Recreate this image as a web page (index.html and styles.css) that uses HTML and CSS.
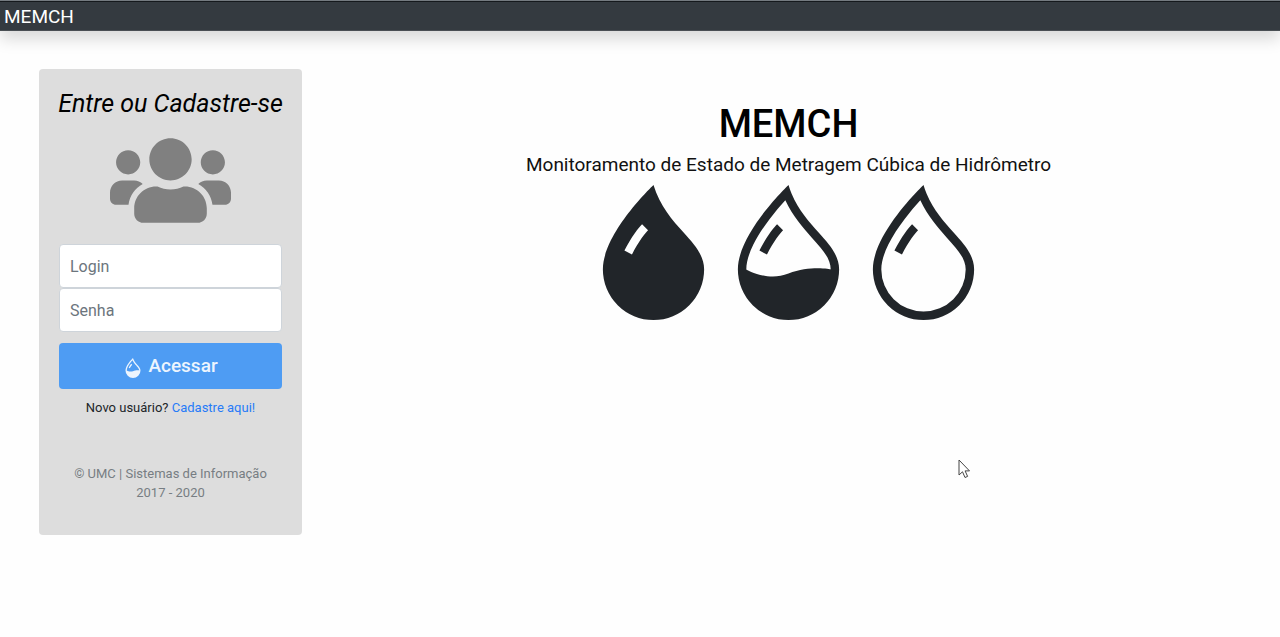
FILE: index.html
```html
<!DOCTYPE html>
<html lang="pt-BR">
<head>
<meta charset="utf-8">
<meta name="viewport" content="width=device-width, initial-scale=1">
<title>MEMCH</title>
<link rel="stylesheet" href="styles.css">
</head>
<body>
<header class="navbar"><a class="brand" href="#">MEMCH</a></header>
<div class="layout">
  <form class="card" onsubmit="return false">
    <h2 class="card-title">Entre ou Cadastre-se</h2>
    <svg class="users" viewBox="0 0 640 512" aria-hidden="true"><path d="M96 224c35.3 0 64-28.7 64-64s-28.7-64-64-64-64 28.7-64 64 28.7 64 64 64zm448 0c35.3 0 64-28.7 64-64s-28.7-64-64-64-64 28.7-64 64 28.7 64 64 64zm32 32h-64c-17.6 0-33.5 7.1-45.1 18.6 40.3 22.1 68.9 62 75.1 109.4h66c17.7 0 32-14.3 32-32v-32c0-35.3-28.7-64-64-64zm-256 0c61.9 0 112-50.1 112-112S381.9 32 320 32 208 82.1 208 144s50.1 112 112 112zm76.8 32h-8.3c-20.8 10-43.9 16-68.5 16s-47.6-6-68.5-16h-8.3C179.6 288 128 339.6 128 403.2V432c0 26.5 21.5 48 48 48h288c26.5 0 48-21.5 48-48v-28.8c0-63.6-51.6-115.2-115.2-115.2zm-223.7-13.4C161.5 263.1 145.6 256 128 256H64c-35.3 0-64 28.7-64 64v32c0 17.7 14.3 32 32 32h65.9c6.3-47.4 34.9-87.3 75.2-109.4z"/></svg>
    <input class="field" type="text" aria-label="Login" placeholder="Login">
    <input class="field" type="password" aria-label="Senha" placeholder="Senha">
    <button class="submit" type="submit">
      <svg class="submit-icon" viewBox="0 0 16 16" aria-hidden="true"><use href="#drop-half"/></svg>
      <span>Acessar</span>
    </button>
    <p class="signup">Novo usuário? <a href="#">Cadastre aqui!</a></p>
    <p class="copyright">© UMC | Sistemas de Informação<br>2017 - 2020</p>
  </form>
  <main class="hero">
    <h1 class="hero-title">MEMCH</h1>
    <p class="hero-text">Monitoramento de Estado de Metragem Cúbica de Hidrômetro</p>
    <div class="drops">
      <svg class="drop" viewBox="0 0 16 16" aria-hidden="true"><path fill-rule="evenodd" d="M8 16a6 6 0 0 0 6-6c0-1.655-1.122-2.904-2.432-4.362C10.254 4.176 8.75 2.503 8 0c0 0-6 5.686-6 10a6 6 0 0 0 6 6zM6.646 4.646c-.376.377-1.272 1.489-2.093 3.13l.894.448c.78-1.559 1.616-2.58 1.907-2.87l-.708-.708z"/></svg>
      <svg class="drop" viewBox="0 0 16 16" aria-hidden="true"><g id="drop-half"><path fill-rule="evenodd" d="M7.21.8C7.69.295 8 0 8 0c.109.363.234.708.371 1.038.812 1.946 2.073 3.35 3.197 4.6C12.878 7.096 14 8.345 14 10a6 6 0 0 1-12 0C2 6.668 5.58 2.517 7.21.8zm.413 1.021A31.25 31.25 0 0 0 5.794 3.99c-.726.95-1.436 2.008-1.96 3.07C3.304 8.133 3 9.138 3 10c0 0 2.5 1.5 5 .5s5-.5 5-.5c0-1.201-.796-2.157-2.181-3.7l-.03-.032C9.75 5.11 8.5 3.72 7.623 1.82z"/><path d="M4.553 7.776c.82-1.641 1.717-2.753 2.093-3.13l.708.708c-.29.29-1.128 1.311-1.907 2.87l-.894-.448z"/></g></svg>
      <svg class="drop" viewBox="0 0 16 16" aria-hidden="true"><path fill-rule="evenodd" d="M7.21.8C7.69.295 8 0 8 0c.109.363.234.708.371 1.038.812 1.946 2.073 3.35 3.197 4.6C12.878 7.096 14 8.345 14 10a6 6 0 0 1-12 0C2 6.668 5.58 2.517 7.21.8zm.413 1.021A31.25 31.25 0 0 0 5.794 3.99c-.726.95-1.436 2.008-1.96 3.07C3.304 8.133 3 9.138 3 10a5 5 0 0 0 10 0c0-1.201-.796-2.157-2.181-3.7l-.03-.032C9.75 5.11 8.5 3.72 7.623 1.82z"/><path d="M4.553 7.776c.82-1.641 1.717-2.753 2.093-3.13l.708.708c-.29.29-1.128 1.311-1.907 2.87l-.894-.448z"/></svg>
    </div>
  </main>
</div>
<svg class="pointer" viewBox="0 0 12 20" aria-hidden="true"><path d="M1 1v15l3.500-3.200 2.500 5.700 2.600-1.100-2.500-5.500h4.400z"/></svg>
</body>
</html>
```
FILE: styles.css
```css
* {
  box-sizing: border-box;
}

body {
  margin: 0;
  background: #fefefe;
  color: #212529;
  font-family: Roboto, "Liberation Sans", sans-serif;
  font-size: 16px;
  line-height: 24px;
}

h1, h2, p {
  margin: 0;
}

.navbar {
  padding: 2px 4px 0;
  background: #343a40;
  border-top: 1px solid #747a80;
  border-bottom: 1px solid #4a4f54;
  box-shadow: inset 0 1px #15191d, 0 8px 16px rgba(0, 0, 0, 0.15);
}

.brand {
  display: block;
  color: #fff;
  font-size: 19px;
  line-height: 27px;
  text-decoration: none;
}

.layout {
  display: flex;
  align-items: flex-start;
  padding: 38px 5px 38px 39px;
}

.card {
  display: flex;
  flex: 0 0 263px;
  flex-direction: column;
  min-width: 0;
  padding: 20px 20px 33px;
  background: #ddd;
  border-radius: 4px;
  text-align: center;
}

.card-title {
  display: flex;
  justify-content: center;
  color: #000;
  font-size: 25px;
  font-style: italic;
  font-weight: 400;
  line-height: 29px;
  white-space: nowrap;
}

.users {
  width: 121px;
  height: 97px;
  margin: 14px auto 15px;
  fill: #808080;
}

.field {
  width: 100%;
  height: 44px;
  padding: 0 10px;
  background: #fff;
  border: 1px solid #ced4da;
  border-radius: 4px;
  color: #495057;
  font: inherit;
}

.field::placeholder {
  color: #6c757d;
  opacity: 1;
}

.submit {
  display: flex;
  align-items: center;
  justify-content: center;
  gap: 5px;
  height: 46px;
  margin: 11px 0 8px;
  padding: 0;
  background: #4e9cf3;
  border: 0;
  border-radius: 4px;
  color: #edf5fe;
  font: 500 19px/28px Roboto, "Liberation Sans", sans-serif;
}

.submit-icon {
  width: 20px;
  height: 20px;
  margin-top: 4px;
  fill: currentColor;
}

.signup {
  font-size: 13px;
  line-height: 21px;
}

.signup a {
  color: #267bf8;
  text-decoration: none;
}

.copyright {
  margin-top: 46px;
  color: #777d83;
  font-size: 13px;
  line-height: 19px;
}

.hero {
  flex: 1;
  padding-top: 31px;
  text-align: center;
}

.hero-title {
  color: #000;
  font-size: 38px;
  font-weight: 500;
  line-height: 48px;
}

.hero-text {
  margin-top: 3px;
  color: #111;
  font-size: 19px;
  line-height: 28px;
}

.drops {
  display: flex;
  justify-content: center;
  margin-top: 6px;
}

.drop {
  width: 135px;
  height: 135px;
  fill: #212529;
}

.pointer {
  position: absolute;
  top: 459px;
  left: 958px;
  width: 12px;
  height: 20px;
  fill: #fff;
  stroke: #444;
}
```
